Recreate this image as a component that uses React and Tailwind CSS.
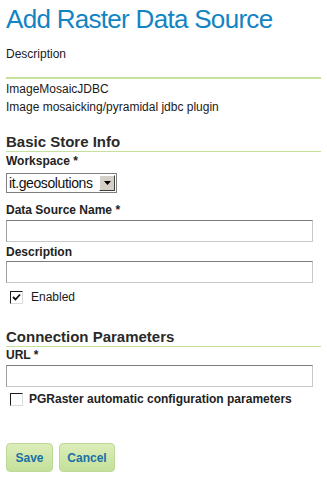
import React from "react";

const Label = ({ children, className = "" }) => (
  <div className={`text-[12px] font-bold text-[#222] leading-[14px] ${className}`}>{children}</div>
);

const TextInput = () => (
  <div className="w-[307px] h-[22px] border border-[#c8c8c8] border-t-[#7b7b7b] border-l-[#a0a0a0] bg-white" />
);

const Checkbox = ({ checked }) => (
  <div className="w-[13px] h-[13px] border border-[#1c1c1c] border-r-[#dcdcdc] border-b-[#dcdcdc] bg-white flex items-center justify-center">
    {checked && (
      <svg width="9" height="9" viewBox="0 0 9 9">
        <path d="M1 4 L3.5 6.5 L8 1.5" stroke="#111" strokeWidth="1.8" fill="none" />
      </svg>
    )}
  </div>
);

const App = () => {
  return (
    <div className="w-[327px] h-[478px] bg-white overflow-hidden px-[6px] font-['Liberation_Sans',Arial,sans-serif] text-[#1a1a1a]">
      <h1 className="text-[26px] leading-[30px] mt-[4px] text-[#1284c2] tracking-[-0.7px]">Add Raster Data Source</h1>
      <div className="text-[12px] leading-[14px] mt-[13px]">Description</div>

      <div className="mt-[16px] h-[2px] w-[315px] bg-[#c5e19c]" />
      <div className="text-[12px] leading-[18px] mt-[1px]">
        <div>ImageMosaicJDBC</div>
        <div>Image mosaicking/pyramidal jdbc plugin</div>
      </div>

      <h2 className="text-[15px] font-bold leading-[18px] mt-[17px] text-[#2a2a2a]">Basic Store Info</h2>
      <div className="h-[1px] w-[315px] bg-[#c5e19c]" />
      <Label className="mt-[2px]">Workspace *</Label>
      <div className="mt-[5px] w-[111px] h-[20px] border border-[#7f7f7f] flex items-center bg-white">
        <span className="flex-1 pl-[2px] text-[14px] leading-[16px] text-[#111] tracking-[-0.4px]">it.geosolutions</span>
        <div className="w-[16px] h-[16px] mr-[1px] bg-[#d4d0c8] border border-[#fff] border-r-[#404040] border-b-[#404040] flex items-center justify-center">
          <svg width="7" height="4" viewBox="0 0 7 4"><path d="M0 0 H7 L3.5 4 Z" fill="#000" /></svg>
        </div>
      </div>

      <Label className="mt-[10px]">Data Source Name *</Label>
      <div className="mt-[3px]"><TextInput /></div>

      <Label className="mt-[3px]">Description</Label>
      <div className="mt-[2px]"><TextInput /></div>

      <div className="flex items-center mt-[7px] ml-[4px] h-[14px]">
        <Checkbox checked />
        <span className="ml-[8px] text-[12px] text-[#1a1a1a]">Enabled</span>
      </div>

      <h2 className="text-[15px] font-bold leading-[18px] mt-[24px] text-[#2a2a2a]">Connection Parameters</h2>
      <div className="h-[1px] w-[315px] bg-[#c5e19c]" />
      <Label className="mt-[1px]">URL *</Label>
      <div className="mt-[3px]"><TextInput /></div>

      <div className="flex items-center mt-[5px] ml-[4px] h-[14px]">
        <Checkbox />
        <span className="ml-[6px] text-[12px] font-bold text-[#222]">PGRaster automatic configuration parameters</span>
      </div>

      <div className="flex gap-[6px] mt-[37px]">
        <button className="w-[47px] h-[29px] rounded-[4px] border border-[#bcd99a] bg-gradient-to-b from-[#dcedb9] to-[#c4e09a] text-[12px] font-bold text-[#1a6fa5]">Save</button>
        <button className="w-[56px] h-[29px] rounded-[4px] border border-[#bcd99a] bg-gradient-to-b from-[#dcedb9] to-[#c4e09a] text-[12px] font-bold text-[#1a6fa5]">Cancel</button>
      </div>
    </div>
  );
};

export default App;
